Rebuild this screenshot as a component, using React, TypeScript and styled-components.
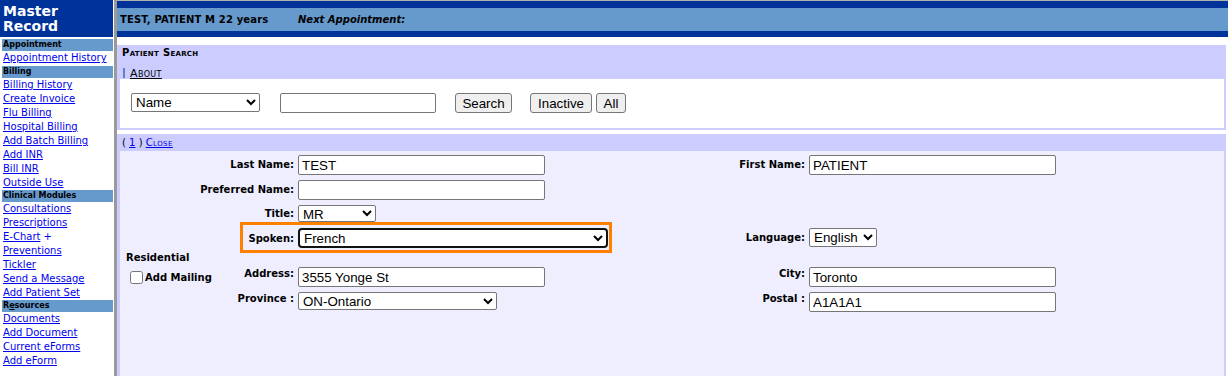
import styled, { createGlobalStyle } from 'styled-components'

const GlobalStyle = createGlobalStyle`
  html, body { margin: 0; padding: 0; background: #fff; }
  body { font-family: "DejaVu Sans", Verdana, sans-serif; color: #000; }
`

const Page = styled.div`
  display: flex;
  height: 376px;
  overflow: hidden;
`

const Sidebar = styled.nav`
  width: 114px;
  flex: none;
  background: #fff;
  border-right: 3px solid #9a9a9a;
`

const Brand = styled.div`
  height: 37px;
  box-sizing: border-box;
  margin-right: 1px;
  padding: 4px 0 0 3px;
  background: #003399;
  color: #fff;
  font-size: 14px;
  font-weight: bold;
  line-height: 15px;
`

const Section = styled.div<{ $first?: boolean }>`
  padding-top: ${p => (p.$first ? '2px' : '0')};
  padding-bottom: ${p => (p.$first ? '1px' : '0')};
`

const SectionHead = styled.div`
  margin: 0 1px 0 2px;
  padding-left: 1px;
  height: 12px;
  line-height: 11px;
  background: #6699cc;
  font-size: 8px;
  font-weight: bold;
  white-space: nowrap;
`

const NavRow = styled.div`
  padding-left: 3px;
  font-size: 10px;
  line-height: 14px;
  white-space: nowrap;
  color: #0000ee;
`

const NavLink = styled.a`
  color: #0000ee;
  text-decoration: underline;
  cursor: pointer;
`

const Main = styled.main`
  flex: 1;
  min-width: 0;
  display: flex;
  flex-direction: column;
  border-top: 1px solid #b0b0b0;
`

const TopBar = styled.div`
  background: #003399;
  padding: 7px 0 6px;
`

const PatientBar = styled.div`
  height: 23px;
  display: flex;
  align-items: center;
  padding-left: 3px;
  background: #6699cc;
  font-size: 10px;
  font-weight: bold;
  white-space: nowrap;
`

const PatientName = styled.span`
  width: 178px;
  letter-spacing: 0.15px;
`

const NextAppt = styled.span`
  font-style: italic;
`

const Panel = styled.section<{ $grow?: boolean }>`
  margin: ${p => (p.$grow ? '4px' : '8px')} 2px 0 0;
  padding: 0 2px ${p => (p.$grow ? '0' : '2px')} 3px;
  background: #ccccff;
  display: flex;
  flex-direction: column;
  flex: ${p => (p.$grow ? '1' : 'none')};
`

const PanelTitle = styled.div`
  padding: 2px 0 0 2px;
  line-height: 12px;
  font-size: 10px;
  font-weight: bold;
  font-variant: small-caps;
  letter-spacing: 0.3px;
`

const AboutRow = styled.div`
  margin-top: 8px;
  padding-left: 3px;
  height: 12px;
  display: flex;
  align-items: center;
  gap: 5px;
  font-size: 11px;
  font-variant: small-caps;
  letter-spacing: 0.4px;
`

const Bar = styled.span`
  width: 2px;
  height: 10px;
  background: #6680c0;
`

const PlainLink = styled.a<{ $color?: string }>`
  color: ${p => p.$color ?? '#0000ee'};
  text-decoration: underline;
  cursor: pointer;
`

const SearchBox = styled.div`
  height: 49px;
  box-sizing: border-box;
  padding: 14px 0 0 11px;
  background: #fff;
  display: flex;
  align-items: flex-start;
`

const controlFont = `
  font-family: "Liberation Sans", Arial, sans-serif;
  font-size: 13.33px;
  color: #000;
  margin: 0;
  box-sizing: border-box;
`

const TextInput = styled.input<{ $w: number }>`
  ${controlFont}
  width: ${p => p.$w}px;
  height: 20px;
  padding: 1px 3px;
  border: 1px solid #767676;
  border-radius: 2px;
  background: #fff;
  outline: none;
`

const Select = styled.select<{ $w: number; $h?: number; $focus?: boolean }>`
  ${controlFont}
  width: ${p => p.$w}px;
  height: ${p => p.$h ?? 18}px;
  border: ${p => (p.$focus ? '2px solid #111' : '1px solid #767676')};
  border-radius: ${p => (p.$focus ? '4px' : '2px')};
  background-color: #fff;
  outline: none;
`

const Button = styled.button<{ $w: number }>`
  ${controlFont}
  width: ${p => p.$w}px;
  height: 20px;
  padding: 0;
  border: 1px solid #767676;
  border-radius: 3px;
  background: #efefef;
`

const Spacer = styled.span<{ $w: number }>`
  width: ${p => p.$w}px;
  flex: none;
`

const CloseRow = styled.div`
  height: 17px;
  box-sizing: border-box;
  padding: 3px 0 0 2px;
  line-height: 12px;
  font-size: 10px;
`

const SmallCaps = styled(PlainLink)`
  font-variant: small-caps;
  letter-spacing: 0.4px;
`

const FormArea = styled.div`
  flex: 1;
  background: #eeeeff;
  padding: 4px 0 0 6px;
  display: grid;
  grid-template-columns: 112px 60px 402px 109px 1fr;
  grid-template-rows: 25px 25px 17px 31px 14px 25px 20px;
  align-content: start;
  align-items: start;
`

const Label = styled.div<{ $col: string; $row: number; $h?: number; $top?: boolean }>`
  grid-column: ${p => p.$col};
  grid-row: ${p => p.$row};
  text-align: right;
  padding-right: 4px;
  white-space: nowrap;
  font-size: 10px;
  font-weight: bold;
  line-height: ${p => (p.$top ? 12 : p.$h ?? 20)}px;
  margin-top: ${p => (p.$row === 4 ? 6 : p.$top ? 1 : 0)}px;
`

const Cell = styled.div<{ $col: string; $row: number; $mt?: number }>`
  grid-column: ${p => p.$col};
  grid-row: ${p => p.$row};
  margin-top: ${p => p.$mt ?? 0}px;
  display: flex;
`

const SpokenBox = styled.div`
  grid-column: 2 / 4;
  grid-row: 4;
  justify-self: start;
  margin-left: 2px;
  display: flex;
  align-items: center;
  padding: 3px 1px 2px 0;
  border: 3px solid #ff7f00;
`

const SpokenLabel = styled.span`
  width: 55px;
  box-sizing: border-box;
  padding-right: 4px;
  text-align: right;
  font-size: 10px;
  font-weight: bold;
`

const Residential = styled.div`
  grid-column: 1 / 3;
  grid-row: 5;
  margin-top: -1px;
  line-height: 12px;
  font-size: 10px;
  font-weight: bold;
`

const MailingCheck = styled.label`
  grid-column: 1;
  grid-row: 6;
  margin-top: 4px;
  display: flex;
  align-items: center;
  font-size: 10px;
  font-weight: bold;
  white-space: nowrap;

  input {
    width: 13px;
    height: 13px;
    margin: 0 2px 0 4px;
  }
`

const sections = [
  { title: 'Appointment', links: ['Appointment History'] },
  {
    title: 'Billing',
    links: ['Billing History', 'Create Invoice', 'Flu Billing', 'Hospital Billing', 'Add Batch Billing', 'Add INR', 'Bill INR', 'Outside Use'],
  },
  {
    title: 'Clinical Modules',
    links: ['Consultations', 'Prescriptions', 'E-Chart', 'Preventions', 'Tickler', 'Send a Message', 'Add Patient Set'],
  },
  { title: 'Resources', links: ['Documents', 'Add Document', 'Current eForms', 'Add eForm'] },
]

const SideMenu = () => (
  <Sidebar>
    <Brand>Master<br />Record</Brand>
    {sections.map((s, i) => (
      <Section key={s.title} $first={i === 0}>
        <SectionHead>
          {s.title === 'Resources' ? <>R<u>e</u>sources</> : s.title}
        </SectionHead>
        {s.links.map(l => (
          <NavRow key={l}>
            <NavLink>{l}</NavLink>
            {l === 'E-Chart' && ' +'}
          </NavRow>
        ))}
      </Section>
    ))}
  </Sidebar>
)

const App = () => (
  <>
    <GlobalStyle />
    <Page>
      <SideMenu />
      <Main>
        <TopBar>
          <PatientBar>
            <PatientName>TEST, PATIENT M 22 years</PatientName>
            <NextAppt>Next Appointment:</NextAppt>
          </PatientBar>
        </TopBar>

        <Panel>
          <PanelTitle>Patient Search</PanelTitle>
          <AboutRow>
            <Bar />
            <PlainLink $color="#000">About</PlainLink>
          </AboutRow>
          <SearchBox>
            <Select $w={129} $h={19} defaultValue="Name">
              <option>Name</option>
              <option>Phone</option>
              <option>DOB</option>
            </Select>
            <Spacer $w={20} />
            <TextInput $w={156} defaultValue="" />
            <Spacer $w={19} />
            <Button $w={57}>Search</Button>
            <Spacer $w={18} />
            <Button $w={62}>Inactive</Button>
            <Spacer $w={4} />
            <Button $w={30}>All</Button>
          </SearchBox>
        </Panel>

        <Panel $grow>
          <CloseRow>
            ( <PlainLink>1</PlainLink> ) <SmallCaps>Close</SmallCaps>
          </CloseRow>
          <FormArea>
            <Label $col="1 / 3" $row={1}>Last Name:</Label>
            <Cell $col="3" $row={1}><TextInput $w={247} defaultValue="TEST" /></Cell>
            <Label $col="4" $row={1}>First Name:</Label>
            <Cell $col="5" $row={1}><TextInput $w={247} defaultValue="PATIENT" /></Cell>

            <Label $col="1 / 3" $row={2}>Preferred Name:</Label>
            <Cell $col="3" $row={2}><TextInput $w={247} defaultValue="" /></Cell>

            <Label $col="1 / 3" $row={3} $h={17}>Title:</Label>
            <Cell $col="3" $row={3}>
              <Select $w={78} $h={17} defaultValue="MR">
                <option>MR</option>
                <option>MS</option>
                <option>MRS</option>
              </Select>
            </Cell>

            <SpokenBox>
              <SpokenLabel>Spoken:</SpokenLabel>
              <Select $w={310} $h={20} $focus defaultValue="French">
                <option>English</option>
                <option>French</option>
              </Select>
            </SpokenBox>
            <Label $col="4" $row={4} $h={19}>Language:</Label>
            <Cell $col="5" $row={4} $mt={6}>
              <Select $w={68} $h={19} defaultValue="English">
                <option>English</option>
                <option>French</option>
              </Select>
            </Cell>

            <Residential>Residential</Residential>

            <MailingCheck>
              <input type="checkbox" />
              Add Mailing
            </MailingCheck>
            <Label $col="2" $row={6} $top>Address:</Label>
            <Cell $col="3" $row={6}><TextInput $w={247} defaultValue="3555 Yonge St" /></Cell>
            <Label $col="4" $row={6} $top>City:</Label>
            <Cell $col="5" $row={6}><TextInput $w={247} defaultValue="Toronto" /></Cell>

            <Label $col="1 / 3" $row={7} $top>Province :</Label>
            <Cell $col="3" $row={7}>
              <Select $w={199} $h={18} defaultValue="ON-Ontario">
                <option>AB-Alberta</option>
                <option>BC-British Columbia</option>
                <option>ON-Ontario</option>
                <option>QC-Quebec</option>
              </Select>
            </Cell>
            <Label $col="4" $row={7} $top>Postal :</Label>
            <Cell $col="5" $row={7}><TextInput $w={247} defaultValue="A1A1A1" /></Cell>
          </FormArea>
        </Panel>
      </Main>
    </Page>
  </>
)

export default App
